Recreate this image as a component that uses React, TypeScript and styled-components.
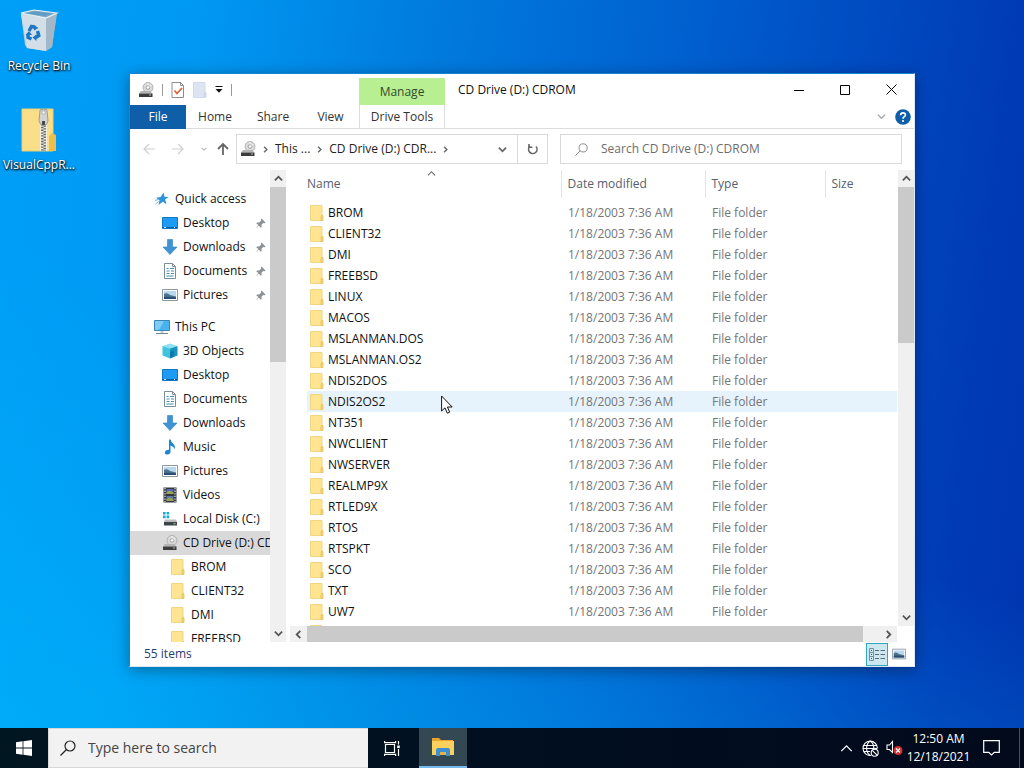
import React from "react";
import styled, { createGlobalStyle, css } from "styled-components";

const GlobalStyle = createGlobalStyle`
  *, *::before, *::after { box-sizing: border-box; }
  body {
    margin: 0;
    font-family: "Open Sans", "Noto Sans", sans-serif;
    font-size: 12px;
    line-height: 16px;
    color: #111;
  }
  button, input {
    font: inherit;
    color: inherit;
    border: 0;
    padding: 0;
    margin: 0;
    background: none;
    border-radius: 0;
  }
  svg { display: block; flex: none; }
`;

/* ---------- icons ---------- */

type IconProps = { size?: number };

const Chevron = ({ dir, size = 9, color = "#555", weight = 2 }: { dir: "up" | "down" | "left" | "right"; size?: number; color?: string; weight?: number }) => {
  const d = { up: "M1 7 5 3l4 4", down: "M1 3l4 4 4-4", left: "M7 1 3 5l4 4", right: "M3 1l4 4-4 4" }[dir];
  return (
    <svg width={size} height={size} viewBox="0 0 10 10" fill="none" stroke={color} strokeWidth={weight}>
      <path d={d} />
    </svg>
  );
};

const RecycleBinIcon = () => (
  <svg width="40" height="44" viewBox="0 0 40 44">
    <path d="M2 5 38 5 37 7 33 38 27 42 8 39 6 36z" fill="#bccddb" />
    <path d="M27 9 38 5 33 38 27 42z" fill="#a3b7c6" />
    <path d="M2 5 27 9 27 42 8 39z" fill="#d3dfe8" />
    <path d="M2 4 15 1 38 4 27 9z" fill="#7fa9c4" stroke="#e8f1f6" strokeWidth="1.200" />
    <path d="M7 4.500 15 2.500 33 4.500 26 7z" fill="#5c9cc6" />
    <g fill="none" stroke="#1c77c4" strokeWidth="3.400">
      <path d="M10 22l2.500-4.500 4 .800" />
      <path d="M18.500 22l1.300 4.500-3 2" />
      <path d="M12.500 30l-3.500-1.500v-3" />
    </g>
    <path d="M14 15.500l5.500 3.500-4.500 2.500zM17.500 25.500v6.500l-4-3.500zM6.500 26l3.500-4 3 4z" fill="#1c77c4" />
  </svg>
);

const ZipFolderIcon = () => (
  <svg width="36" height="44" viewBox="0 0 36 44">
    <path d="M1 1h31v42H1z" fill="#fbdf88" />
    <path d="M1 1h31v42H1z" fill="none" stroke="#edcd74" />
    <path d="M28 43V28l3-3 4 2v16z" fill="#edbd4e" />
    <path d="M22.500 12v31" stroke="#efece2" strokeWidth="7" />
    <path d="M21.300 16v27" stroke="#66625b" strokeWidth="2.400" strokeDasharray="1.400 1.400" />
    <path d="M23.700 17.400v25.600" stroke="#66625b" strokeWidth="2.400" strokeDasharray="1.400 1.400" />
    <path d="M19 2q3.500-2 7 0l1 11-2 4h-5l-2-4z" fill="#d3d3d3" stroke="#8b8b8b" strokeWidth=".8" />
    <path d="M21 3h3v3h-3z" fill="#fafafa" stroke="#999" strokeWidth=".6" />
    <path d="M21 13h3v4h-3z" fill="#4a4a4a" />
  </svg>
);

const CdDriveIcon = ({ size = 16 }: IconProps) => (
  <svg width={size} height={size} viewBox="0 0 16 16">
    <circle cx="10" cy="5.500" r="5" fill="#dadada" stroke="#a3a3a3" strokeWidth=".8" />
    <circle cx="10" cy="5.500" r="1.800" fill="#fff" stroke="#8a8a8a" strokeWidth=".8" />
    <path d="M10 1v2.500M13 3l-1.500 1.500" stroke="#f8f8f8" />
    <path d="M3 9h9l2.500 2.500H1z" fill="#b4b4b4" />
    <path d="M1 11.500h13.500V15H1z" fill="#3c3c3c" />
    <path d="M11 13h2" stroke="#bbb" />
  </svg>
);

const LocalDiskIcon = () => (
  <svg width="16" height="16" viewBox="0 0 16 16">
    <path d="M1 1h2.600v2.600H1zM4.600 1h2.600v2.600H4.600zM1 4.600h2.600v2.600H1zM4.600 4.600h2.600v2.600H4.600z" fill="#17a8d6" />
    <path d="M3 8.500h11l1 2.500H2z" fill="#bcbcbc" />
    <path d="M2 11h13v3.500H2z" fill="#3c4448" />
    <path d="M11.500 12.700h2" stroke="#7fe08a" />
  </svg>
);

const FolderIcon = () => (
  <svg width="14" height="16" viewBox="0 0 14 16">
    <path d="M.5.500h11.500v15H.5z" fill="#ffe591" stroke="#f0d683" />
    <path d="M11 15.500v-4l1-1.500 1 1v4.500z" fill="#f6d574" stroke="#e3c05e" strokeWidth=".8" />
  </svg>
);

const StarIcon = () => (
  <svg width="14" height="14" viewBox="0 0 14 14">
    <path d="M8.500.500l1 4.200 4.200.300-3.600 2.600 1.400 4.600L7.800 9.800 3.500 13l1-4.700L1 5.700l4.600-.800z" fill="#2f93dd" />
    <path d="M0 8.500l3-1M.5 12l3-2.500" stroke="#6cb6ea" />
  </svg>
);

const DesktopIcon = () => (
  <svg width="16" height="16" viewBox="0 0 16 16">
    <path d="M.5 2.500h15v11H.5z" fill="#1e9bf5" stroke="#1378c4" />
    <path d="M1 12.500h14" stroke="#0a5da6" />
    <path d="M2 12.500h2M12 12.500h1" stroke="#cfe8fb" />
  </svg>
);

const DownloadIcon = () => (
  <svg width="16" height="16" viewBox="0 0 16 16">
    <path d="M5.500.500h5V8H15l-7 7.500L1 8h4.500z" fill="#3f93d4" stroke="#2e7fc0" strokeWidth=".6" />
  </svg>
);

const DocumentIcon = () => (
  <svg width="16" height="16" viewBox="0 0 16 16">
    <path d="M2.500.500h8l3 3v12h-11z" fill="#fff" stroke="#7d8b94" />
    <path d="M10.500.500v3h3" fill="none" stroke="#7d8b94" />
    <path d="M4.500 5.500h2M8 5.500h4M4.500 8h3M9 8h3M4.500 10.500h3M9 10.500h3M4.500 13h7" stroke="#3d95b8" strokeWidth="1.200" />
  </svg>
);

const PictureIcon = ({ size = 16 }: IconProps) => (
  <svg width={size} height={size} viewBox="0 0 16 16">
    <path d="M.5 2.500h15v11H.5z" fill="#fff" stroke="#8c979e" />
    <path d="M2 4h12v8H2z" fill="#b9d8f0" />
    <path d="M2 7q3-2 6 1l6 1.500V12H2z" fill="#4b7289" />
    <path d="M2 10q6-.500 12 .500V12H2z" fill="#2c4c78" />
  </svg>
);

const PcIcon = () => (
  <svg width="16" height="16" viewBox="0 0 16 16">
    <path d="M.5 1.500h15v10H.5z" fill="#49b3ef" stroke="#3b85b5" />
    <path d="M1 2h9L5 11H1z" fill="#7ecbf6" />
    <path d="M6.500 12h3v2h-3z" fill="#c4d0d8" />
    <path d="M2 14.500h12" stroke="#6d8796" />
  </svg>
);

const CubeIcon = () => (
  <svg width="16" height="16" viewBox="0 0 16 16">
    <path d="M.5 3 8 .500 15.500 3 8 5.500z" fill="#8be3f2" />
    <path d="M.5 3 8 5.500V15.500L.5 12.500z" fill="#3fc4de" />
    <path d="M15.500 3 8 5.500v10l7.500-3z" fill="#1793c0" />
    <path d="M8 9l4-1.500v6L8 15z" fill="#0f77aa" />
  </svg>
);

const MusicIcon = () => (
  <svg width="16" height="16" viewBox="0 0 16 16">
    <path d="M7 .500h1.500q.5 3 3.500 5 1.500 2 .5 5-.5-3-4-4v6q0 3-3 3T3 13.200q0-2.200 4-2.500z" fill="#1a87d6" />
  </svg>
);

const VideoIcon = () => (
  <svg width="16" height="16" viewBox="0 0 16 16">
    <path d="M1.500.500h13v15h-13z" fill="#34373f" />
    <path d="M3 1v14M13 1v14" stroke="#e6e6e6" strokeWidth="1.200" strokeDasharray="1.300 1.300" />
    <path d="M4.500 2h7v5h-7z" fill="#5466b8" />
    <path d="M4.500 9h7v5h-7z" fill="#5a78a6" />
    <path d="M4.500 5l3-1.500 4 2V7h-7zM4.500 12l3-1.500 4 2V14h-7z" fill="#9aa54d" />
  </svg>
);

const PinIcon = () => (
  <svg width="11" height="11" viewBox="0 0 11 11">
    <path d="M6.500.500l4 4-1 .700-1.200-.200L6.500 6.800l.1 2.200-.8.800L3.700 7.500.5 10.500l2.800-3.400L1.200 5.200l.8-.800 2.200.100L6 2.700l-.2-1.200z" fill="#8c9196" />
  </svg>
);

const PropertiesIcon = () => (
  <svg width="14" height="16" viewBox="0 0 14 16">
    <path d="M1 .500h8.500l3 3v12H1z" fill="#fff" stroke="#8d8d8d" />
    <path d="M9.500.500v3h3" fill="none" stroke="#8d8d8d" />
    <path d="M3.500 8.500l2.500 3 5-5.500" fill="none" stroke="#d9663d" strokeWidth="1.800" />
  </svg>
);

const NewFolderIcon = () => (
  <svg width="14" height="16" viewBox="0 0 14 16">
    <path d="M.5.500h11.500v15H.5z" fill="#dde5f3" stroke="#d0d9ea" />
    <path d="M10.500 15.500v-4l2-1.500 1 1v4.500z" fill="#cdd7ea" />
  </svg>
);

const CustomizeIcon = () => (
  <svg width="8" height="7" viewBox="0 0 8 7">
    <path d="M.5.500h7" stroke="#111" />
    <path d="M.5 3h7L4 6.800z" fill="#111" />
  </svg>
);

const ArrowIcon = ({ dir, color }: { dir: "left" | "right" | "up"; color: string }) => {
  const d = { left: "M12 6H1M6 1 1 6l5 5", right: "M0 6h11M6 1l5 5-5 5", up: "M6 12V1M1 6l5-5 5 5" }[dir];
  return (
    <svg width="12" height="12" viewBox="0 0 12 12" fill="none" stroke={color} strokeWidth={dir === "up" ? 1.8 : 1.2}>
      <path d={d} />
    </svg>
  );
};

const RefreshIcon = () => (
  <svg width="12" height="12" viewBox="0 0 12 12" fill="none" stroke="#666" strokeWidth="1.600">
    <path d="M3 3.200A4.200 4.200 0 1 0 9 3.600" />
    <path d="M2 1v3.200h3.400" />
  </svg>
);

const SearchIcon = ({ size, color, weight }: { size: number; color: string; weight: number }) => (
  <svg width={size} height={size} viewBox="0 0 16 16" fill="none" stroke={color} strokeWidth={weight}>
    <circle cx="10" cy="6" r="5" />
    <path d="M6.500 9.500.5 15.500" />
  </svg>
);

const HelpIcon = () => (
  <svg width="16" height="16" viewBox="0 0 16 16">
    <circle cx="8" cy="8" r="7.800" fill="#0f5ea8" />
    <path d="M5.600 6.200Q5.700 3.900 8 3.900t2.400 2Q10.400 7.200 8.900 8 8 8.500 8 9.700" fill="none" stroke="#fff" strokeWidth="1.600" />
    <circle cx="8" cy="12" r="1.100" fill="#fff" />
  </svg>
);

const MinimizeIcon = () => <svg width="10" height="10"><path d="M0 5.500h10" stroke="#000" /></svg>;
const MaximizeIcon = () => <svg width="10" height="10"><path d="M.5.500h9v9h-9z" fill="none" stroke="#000" /></svg>;
const CloseIcon = () => <svg width="11" height="11"><path d="M.5.500l10 10M10.500.500l-10 10" stroke="#000" /></svg>;

const DetailsViewIcon = () => (
  <svg width="16" height="13" viewBox="0 0 16 13" fill="none">
    <path d="M.5.500h4v12h-4zM.5 4.500h4M.5 8.500h4" stroke="#7c8f99" />
    <path d="M2 2.500h1M2 6.500h1M2 10.500h1" stroke="#2b5a78" />
    <path d="M6 2.500h4M11.500 2.500H16M6 6.500h4M11.500 6.500H16M6 10.500h4M11.500 10.500H16" stroke="#5f6a80" />
  </svg>
);

const WindowsIcon = () => (
  <svg width="16" height="16" viewBox="0 0 16 16" fill="#fff">
    <path d="M0 2.200 6.600 1.300v6.300H0zM7.400 1.200 16 0v7.600H7.400zM0 8.400h6.600v6.300L0 13.800zM7.400 8.400H16V16l-8.600-1.200z" />
  </svg>
);

const TaskViewIcon = () => (
  <svg width="17" height="15" viewBox="0 0 17 15" fill="none" stroke="#fff" strokeWidth="1.200">
    <path d="M1.500 3.500h9v8h-9z" />
    <path d="M.6 0v1.600h11V0M.6 15v-1.600h11V15" />
    <path d="M14.500 0v3.500M14.500 8v7" />
    <path d="M13.200 4.500h2.600v2.600h-2.600z" fill="#fff" stroke="none" />
  </svg>
);

const ExplorerIcon = () => (
  <svg width="22" height="18" viewBox="0 0 22 18">
    <path d="M0 0h7l2 2h12v3H0z" fill="#e8a52d" />
    <path d="M0 3h22v14H0z" fill="#fbd15b" />
    <path d="M4 18v-6q0-2 2-2h10q2 0 2 2v6h-4v-4H8v4z" fill="#3c8fd0" />
    <path d="M8 14h6v3H8z" fill="#e2b443" />
  </svg>
);

const GlobeIcon = () => (
  <svg width="17" height="17" viewBox="0 0 17 17" fill="none" stroke="#fff" strokeWidth="1.100">
    <path d="M9 15.500A7.200 7.200 0 1 1 15.400 8.500" />
    <path d="M8.200 1q-3.600 2.500-3.600 7.200T8.200 15.500M8.200 1q3.600 2.500 3.600 7" />
    <path d="M1.800 5.500h12.800M1 8.500h14M1.800 11.500H8" />
    <circle cx="12.700" cy="12.700" r="3.500" fill="#020d1e" />
    <path d="M10.300 10.300l4.800 4.800" />
  </svg>
);

const SpeakerIcon = () => (
  <svg width="17" height="16" viewBox="0 0 17 16">
    <path d="M1 5h2.500L6.500 1.500v11L3.500 9.500H1z" fill="none" stroke="#fff" strokeWidth="1.100" />
    <circle cx="12" cy="10.500" r="4.500" fill="#d1302f" />
    <path d="M10 8.500l4 4M14 8.500l-4 4" stroke="#fff" strokeWidth="1.200" />
  </svg>
);

const NotificationIcon = () => (
  <svg width="17" height="16" viewBox="0 0 17 16" fill="none" stroke="#fff" strokeWidth="1.200">
    <path d="M.7.700h15.600v11.600h-5L8.500 15l-2.800-2.700h-5z" />
  </svg>
);

const PointerIcon = () => (
  <svg width="12" height="19" viewBox="0 0 12 19">
    <path d="M.6 1v15l3.400-3.200 2.300 5.400 2.400-1-2.300-5.200h4.800z" fill="#fff" stroke="#111" />
  </svg>
);

/* ---------- desktop ---------- */

const Desktop = styled.div`
  min-height: 100vh;
  display: flex;
  flex-direction: column;
  background: linear-gradient(97deg, #009ff7 0%, #0098f2 18%, #007add 40%, #0062d0 60%, #004bc1 78%, #003ab5 92%, #0036b0 100%);
`;

const Workspace = styled.main`
  position: relative;
  flex: 1;
  background: linear-gradient(20deg, rgba(0, 190, 255, 0.45) 0%, rgba(0, 170, 255, 0) 45%);
`;

const Shortcuts = styled.div`
  width: 78px;
  padding-top: 9px;
  display: flex;
  flex-direction: column;
  gap: 25px;
`;

const Shortcut = styled.button`
  height: 74px;
  display: flex;
  flex-direction: column;
  align-items: center;
  justify-content: flex-start;
  gap: 5px;
  color: #fff;
  text-shadow: 0 1px 2px #000, 1px 1px 2px rgba(0, 0, 0, 0.8);
`;

const ExplorerWindow = styled.section`
  position: absolute;
  inset: 73px 109px 61px 129px;
  display: flex;
  flex-direction: column;
  overflow: hidden;
  background: #fff;
  border: 1px solid #1583cf;
  border-right-color: #dfe8f5;
  border-bottom-color: #dfe8f5;
  box-shadow: 0 3px 14px rgba(0, 0, 0, 0.35);
`;

/* ---------- title bar and ribbon ---------- */

const TitleBar = styled.header`
  display: flex;
  height: 31px;
`;

const QuickToolbar = styled.div`
  width: 229px;
  display: flex;
  align-items: center;
  padding-left: 8px;
  gap: 8px;
`;

const ToolButton = styled.button`
  display: flex;
  align-items: center;
  justify-content: center;
`;

const Divider = styled.span`
  width: 1px;
  height: 12px;
  background: #999;
`;

const ContextTab = styled.div`
  width: 86px;
  margin-top: 4px;
  background: #b9ef93;
  color: #33482a;
  line-height: 28px;
  text-align: center;
`;

const WindowTitle = styled.h1`
  flex: 1;
  margin: 0;
  padding-left: 13px;
  font-size: 12px;
  font-weight: 400;
  line-height: 31px;
`;

const CaptionButton = styled.button`
  width: 46px;
  display: flex;
  align-items: center;
  justify-content: center;
`;

const Ribbon = styled.nav`
  display: flex;
  height: 24px;
  border-bottom: 1px solid #dcdcdc;
`;

const RibbonTab = styled.button<{ $variant?: "file" | "context" }>`
  width: 58px;
  text-align: center;
  color: #333;
  ${({ $variant }) => $variant === "file" && css`
    width: 56px;
    margin-bottom: -1px;
    background: #0f5ea8;
    color: #fff;
  `}
  ${({ $variant }) => $variant === "context" && css`
    width: 86px;
    border: solid #dcdcdc;
    border-width: 0 1px;
  `}
`;

const ViewTab = styled(RibbonTab)`
  width: 57px;
`;

const RibbonEnd = styled.div`
  margin-left: auto;
  padding-right: 3px;
  display: flex;
  align-items: center;
  gap: 9px;
`;

/* ---------- address bar ---------- */

const AddressRow = styled.div`
  display: flex;
  height: 41px;
  padding: 5px 12px 6px 0;
`;

const History = styled.div`
  flex: none;
  width: 106px;
  display: flex;
  align-items: center;
  padding-left: 13px;
  gap: 17px;
`;

const HistoryEnd = styled.div`
  display: flex;
  align-items: center;
  gap: 10px;
`;

const AddressBar = styled.div`
  flex: 1 1 312px;
  min-width: 0;
  display: flex;
  align-items: center;
  border: 1px solid #d9d9d9;
`;

const Crumbs = styled.div`
  flex: 1;
  display: flex;
  align-items: center;
  gap: 6px;
  padding-left: 3px;
  white-space: nowrap;
`;

const Crumb = styled.a`
  color: #222;
  text-decoration: none;
`;

const BarButton = styled.button<{ $divided?: boolean }>`
  width: 30px;
  align-self: stretch;
  display: flex;
  align-items: center;
  justify-content: center;
  border-left: ${({ $divided }) => ($divided ? "1px solid #d9d9d9" : "0")};
`;

const SearchBox = styled.label`
  flex: 1 1 342px;
  min-width: 0;
  margin-left: 12px;
  padding-left: 14px;
  display: flex;
  align-items: center;
  gap: 13px;
  border: 1px solid #d9d9d9;
`;

const SearchInput = styled.input`
  flex: 1;
  min-width: 0;
  outline: none;
  &::placeholder { color: #6d6d6d; opacity: 1; }
`;

/* ---------- body ---------- */

const Body = styled.div`
  flex: 1;
  min-height: 0;
  display: flex;
`;

const NavPane = styled.nav`
  flex: none;
  width: 140px;
  overflow: hidden;
  padding-top: 17px;
`;

const NavGroup = styled.ul`
  list-style: none;
  margin: 0 0 8px;
  padding: 0;
`;

const NavItem = styled.li<{ $level: number; $selected?: boolean }>`
  height: 24px;
  display: flex;
  align-items: center;
  gap: 5px;
  padding-left: ${({ $level }) => [24, 32, 40][$level]}px;
  background: ${({ $selected }) => ($selected ? "#d9d9d9" : "transparent")};
  white-space: nowrap;
`;

const NavLink = styled.a`
  flex: 1;
  color: inherit;
  text-decoration: none;
`;

const PinSlot = styled.span`
  padding-right: 4px;
`;

const IconSlot = styled.span`
  width: 16px;
  display: flex;
  justify-content: center;
`;

const Track = styled.div<{ $horizontal?: boolean }>`
  flex: none;
  display: flex;
  flex-direction: ${({ $horizontal }) => ($horizontal ? "row" : "column")};
  background: #f0f0f0;
  ${({ $horizontal }) => ($horizontal ? "height: 16px;" : "width: 16px;")}
`;

const TrackButton = styled.button`
  flex: none;
  width: 17px;
  height: 17px;
  display: flex;
  align-items: center;
  justify-content: center;
`;

const Rail = styled.div<{ $horizontal?: boolean }>`
  flex: 1;
  display: flex;
  flex-direction: ${({ $horizontal }) => ($horizontal ? "row" : "column")};
`;

const Thumb = styled.div<{ $share: number }>`
  flex: 0 0 ${({ $share }) => $share}%;
  background: #cacaca;
`;

const Content = styled.div`
  flex: 1;
  min-width: 0;
  margin-left: 4px;
  display: flex;
  flex-direction: column;
`;

const ContentRow = styled.div`
  flex: 1;
  min-height: 0;
  display: flex;
`;

const ListArea = styled.div`
  flex: 1;
  min-width: 0;
  overflow: hidden;
  padding: 0 1px 0 17px;
`;

const HorizontalScroll = styled.div`
  padding-right: 17px;
`;

const FileTable = styled.table`
  width: 100%;
  table-layout: fixed;
  border-collapse: collapse;
  tbody::before { content: ""; display: block; height: 4px; }
`;

const NameCol = styled.col`width: 254px;`;
const DateCol = styled.col`width: 144px;`;
const TypeCol = styled.col`width: 120px;`;

const HeadCell = styled.th<{ $first?: boolean }>`
  position: relative;
  height: 28px;
  padding: 0 0 0 ${({ $first }) => ($first ? "0" : "6px")};
  border-left: ${({ $first }) => ($first ? "0" : "1px solid #e3e3e3")};
  color: #56606e;
  font-weight: 400;
  text-align: left;
`;

const SortMark = styled.span`
  position: absolute;
  top: -1px;
  left: 0;
  right: 4px;
  display: flex;
  justify-content: center;
`;

const FileRow = styled.tr<{ $hover?: boolean }>`
  background: ${({ $hover }) => ($hover ? "#e7f3fc" : "transparent")};
`;

const Cell = styled.td`
  height: 21px;
  padding: 0 0 0 7px;
  color: #757575;
`;

const NameCell = styled(Cell)`
  padding-left: 3px;
  color: #111;
`;

const FileName = styled.div`
  display: flex;
  align-items: center;
  gap: 4px;
`;

const Pointer = styled.span`
  position: absolute;
  left: 441px;
  top: 395px;
`;

const StatusBar = styled.footer`
  height: 24px;
  display: flex;
  align-items: center;
  padding: 0 1px 0 14px;
  color: #28406b;
`;

const ViewButton = styled.button<{ $active?: boolean }>`
  width: 22px;
  height: 23px;
  display: flex;
  align-items: center;
  justify-content: center;
  ${({ $active }) => $active && css`
    margin-left: auto;
    background: #cbe8f1;
    border: 1px solid #33a5c0;
  `}
`;

const SmallViewButton = styled(ViewButton)`
  width: 25px;
  padding-right: 3px;
`;

/* ---------- taskbar ---------- */

const Taskbar = styled.footer`
  height: 40px;
  display: flex;
  background: linear-gradient(90deg, #001621, #010f20 50%, #020a1c);
  color: #fff;
`;

const TaskButton = styled.button<{ $open?: boolean }>`
  width: 48px;
  display: flex;
  align-items: center;
  justify-content: center;
  ${({ $open }) => $open && css`
    margin-left: 3px;
    background: #344853;
    border-bottom: 2px solid #76b9ed;
  `}
`;

const TaskSearch = styled.label`
  width: 320px;
  display: flex;
  align-items: center;
  gap: 12px;
  padding-left: 11px;
  background: #f2f2f2;
  border: 1px solid #d8d8d8;
  border-right: 0;
  color: #222;
  font-size: 14px;
`;

const TaskSearchInput = styled(SearchInput)`
  line-height: 20px;
  &::placeholder { color: #444; }
`;

const Tray = styled.div`
  margin-left: auto;
  display: flex;
  align-items: center;
`;

const TrayButton = styled.button`
  width: 24px;
  height: 40px;
  display: flex;
  align-items: center;
  justify-content: center;
`;

const Clock = styled.time`
  width: 65px;
  margin-right: 2px;
  text-align: center;
  line-height: 18px;
  white-space: nowrap;
`;

const ActionCenter = styled(TrayButton)`
  width: 36px;
`;

const ShowDesktop = styled.button`
  width: 5px;
  height: 40px;
  margin-left: 10px;
  border-left: 1px solid #47505c;
`;

/* ---------- data ---------- */

type NavEntry = { label: string; icon: React.ReactNode; level: number; pinned?: boolean; selected?: boolean };

const quickAccess: NavEntry[] = [
  { label: "Quick access", icon: <StarIcon />, level: 0 },
  { label: "Desktop", icon: <DesktopIcon />, level: 1, pinned: true },
  { label: "Downloads", icon: <DownloadIcon />, level: 1, pinned: true },
  { label: "Documents", icon: <DocumentIcon />, level: 1, pinned: true },
  { label: "Pictures", icon: <PictureIcon />, level: 1, pinned: true },
];

const thisPc: NavEntry[] = [
  { label: "This PC", icon: <PcIcon />, level: 0 },
  { label: "3D Objects", icon: <CubeIcon />, level: 1 },
  { label: "Desktop", icon: <DesktopIcon />, level: 1 },
  { label: "Documents", icon: <DocumentIcon />, level: 1 },
  { label: "Downloads", icon: <DownloadIcon />, level: 1 },
  { label: "Music", icon: <MusicIcon />, level: 1 },
  { label: "Pictures", icon: <PictureIcon />, level: 1 },
  { label: "Videos", icon: <VideoIcon />, level: 1 },
  { label: "Local Disk (C:)", icon: <LocalDiskIcon />, level: 1 },
  { label: "CD Drive (D:) CD", icon: <CdDriveIcon />, level: 1, selected: true },
  { label: "BROM", icon: <FolderIcon />, level: 2 },
  { label: "CLIENT32", icon: <FolderIcon />, level: 2 },
  { label: "DMI", icon: <FolderIcon />, level: 2 },
  { label: "FREEBSD", icon: <FolderIcon />, level: 2 },
];

const folders = [
  "BROM", "CLIENT32", "DMI", "FREEBSD", "LINUX", "MACOS", "MSLANMAN.DOS", "MSLANMAN.OS2", "NDIS2DOS", "NDIS2OS2",
  "NT351", "NWCLIENT", "NWSERVER", "REALMP9X", "RTLED9X", "RTOS", "RTSPKT", "SCO", "TXT", "UW7",
];

const NavList = ({ entries }: { entries: NavEntry[] }) => (
  <NavGroup>
    {entries.map((entry) => (
      <NavItem key={entry.label} $level={entry.level} $selected={entry.selected}>
        <IconSlot>{entry.icon}</IconSlot>
        <NavLink href="#">{entry.label}</NavLink>
        {entry.pinned && <PinSlot><PinIcon /></PinSlot>}
      </NavItem>
    ))}
  </NavGroup>
);

const ScrollBar = ({ share, horizontal }: { share: number; horizontal?: boolean }) => (
  <Track $horizontal={horizontal}>
    <TrackButton aria-label={horizontal ? "Scroll left" : "Scroll up"}>
      <Chevron dir={horizontal ? "left" : "up"} />
    </TrackButton>
    <Rail $horizontal={horizontal}><Thumb $share={share} /></Rail>
    <TrackButton aria-label={horizontal ? "Scroll right" : "Scroll down"}>
      <Chevron dir={horizontal ? "right" : "down"} />
    </TrackButton>
  </Track>
);

export default function App() {
  return (
    <Desktop>
      <GlobalStyle />
      <Workspace>
        <Shortcuts>
          <Shortcut><RecycleBinIcon />Recycle Bin</Shortcut>
          <Shortcut><ZipFolderIcon />VisualCppR...</Shortcut>
        </Shortcuts>

        <ExplorerWindow>
          <TitleBar>
            <QuickToolbar>
              <CdDriveIcon />
              <Divider />
              <ToolButton aria-label="Properties"><PropertiesIcon /></ToolButton>
              <ToolButton aria-label="New folder"><NewFolderIcon /></ToolButton>
              <ToolButton aria-label="Customize toolbar"><CustomizeIcon /></ToolButton>
              <Divider />
            </QuickToolbar>
            <ContextTab>Manage</ContextTab>
            <WindowTitle>CD Drive (D:) CDROM</WindowTitle>
            <CaptionButton aria-label="Minimize"><MinimizeIcon /></CaptionButton>
            <CaptionButton aria-label="Maximize"><MaximizeIcon /></CaptionButton>
            <CaptionButton aria-label="Close"><CloseIcon /></CaptionButton>
          </TitleBar>
          <Ribbon>
            <RibbonTab $variant="file">File</RibbonTab>
            <RibbonTab>Home</RibbonTab>
            <RibbonTab>Share</RibbonTab>
            <ViewTab>View</ViewTab>
            <RibbonTab $variant="context">Drive Tools</RibbonTab>
            <RibbonEnd>
              <ToolButton aria-label="Expand ribbon"><Chevron dir="down" color="#aaa" weight={1.5} /></ToolButton>
              <ToolButton aria-label="Help"><HelpIcon /></ToolButton>
            </RibbonEnd>
          </Ribbon>
          <AddressRow>
            <History>
              <ToolButton aria-label="Back"><ArrowIcon dir="left" color="#d0d0d0" /></ToolButton>
              <ToolButton aria-label="Forward"><ArrowIcon dir="right" color="#d0d0d0" /></ToolButton>
              <HistoryEnd>
                <ToolButton aria-label="Recent locations"><Chevron dir="down" size={6} color="#bbb" /></ToolButton>
                <ToolButton aria-label="Up"><ArrowIcon dir="up" color="#666" /></ToolButton>
              </HistoryEnd>
            </History>
            <AddressBar>
              <Crumbs>
                <CdDriveIcon />
                <Chevron dir="right" size={7} color="#666" />
                <Crumb href="#">This ...</Crumb>
                <Chevron dir="right" size={7} color="#666" />
                <Crumb href="#">CD Drive (D:) CDR...</Crumb>
                <Chevron dir="right" size={7} color="#666" />
              </Crumbs>
              <BarButton aria-label="Previous locations"><Chevron dir="down" color="#666" /></BarButton>
              <BarButton $divided aria-label="Refresh"><RefreshIcon /></BarButton>
            </AddressBar>
            <SearchBox>
              <SearchIcon size={13} color="#8a8a8a" weight={1.2} />
              <SearchInput aria-label="Search CD Drive" placeholder="Search CD Drive (D:) CDROM" />
            </SearchBox>
          </AddressRow>
          <Body>
            <NavPane>
              <NavList entries={quickAccess} />
              <NavList entries={thisPc} />
            </NavPane>
            <ScrollBar share={40} />
            <Content>
              <ContentRow>
                <ListArea>
                  <FileTable>
                    <colgroup><NameCol /><DateCol /><TypeCol /><col /></colgroup>
                    <thead>
                      <tr>
                        <HeadCell $first>
                          Name
                          <SortMark><Chevron dir="up" color="#666" weight={1.2} /></SortMark>
                        </HeadCell>
                        <HeadCell>Date modified</HeadCell>
                        <HeadCell>Type</HeadCell>
                        <HeadCell>Size</HeadCell>
                      </tr>
                    </thead>
                    <tbody>
                      {folders.map((name) => (
                        <FileRow key={name} $hover={name === "NDIS2OS2"}>
                          <NameCell><FileName><FolderIcon />{name}</FileName></NameCell>
                          <Cell>1/18/2003 7:36 AM</Cell>
                          <Cell>File folder</Cell>
                          <Cell />
                        </FileRow>
                      ))}
                      <FileRow>
                        <NameCell colSpan={4}><FolderIcon /></NameCell>
                      </FileRow>
                    </tbody>
                  </FileTable>
                </ListArea>
                <ScrollBar share={37} />
              </ContentRow>
              <HorizontalScroll><ScrollBar horizontal share={97} /></HorizontalScroll>
            </Content>
          </Body>
          <StatusBar>
            55 items
            <ViewButton $active aria-label="Details view"><DetailsViewIcon /></ViewButton>
            <SmallViewButton aria-label="Large icons view"><PictureIcon size={14} /></SmallViewButton>
          </StatusBar>
        </ExplorerWindow>
        <Pointer><PointerIcon /></Pointer>
      </Workspace>

      <Taskbar>
        <TaskButton aria-label="Start"><WindowsIcon /></TaskButton>
        <TaskSearch>
          <SearchIcon size={16} color="#222" weight={1.2} />
          <TaskSearchInput aria-label="Search" placeholder="Type here to search" />
        </TaskSearch>
        <TaskButton aria-label="Task view"><TaskViewIcon /></TaskButton>
        <TaskButton $open aria-label="File Explorer"><ExplorerIcon /></TaskButton>
        <Tray>
          <TrayButton aria-label="Show hidden icons"><Chevron dir="up" size={13} color="#fff" weight={1} /></TrayButton>
          <TrayButton aria-label="Network"><GlobeIcon /></TrayButton>
          <TrayButton aria-label="Volume"><SpeakerIcon /></TrayButton>
          <Clock>12:50 AM<br />12/18/2021</Clock>
          <ActionCenter aria-label="Notifications"><NotificationIcon /></ActionCenter>
          <ShowDesktop aria-label="Show desktop" />
        </Tray>
      </Taskbar>
    </Desktop>
  );
}
